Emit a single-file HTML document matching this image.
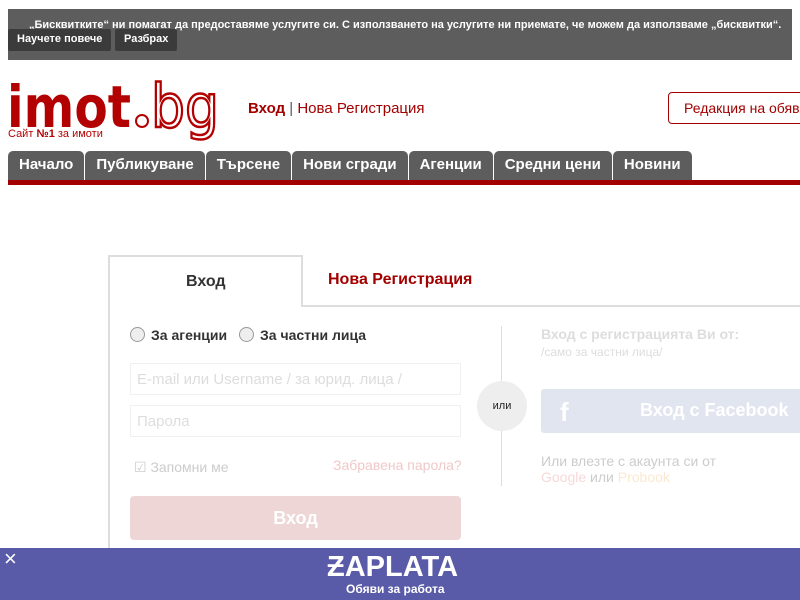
<!DOCTYPE html>
<html><head><meta charset="utf-8"><style>
*{margin:0;padding:0;box-sizing:border-box}
body{width:800px;height:600px;overflow:hidden;background:#fff;font-family:"Liberation Sans",sans-serif;position:relative}
.ck{position:absolute;left:8px;top:9px;width:784px;height:51px;background:#5d5d5d;color:#fff;font-size:11px;font-weight:bold}
.ck .t{position:absolute;left:21px;top:10px;white-space:nowrap}
.ck .b{position:absolute;top:20px;height:22px;background:#3b3b3b;border-radius:2px;padding:4px 9px;font-size:11px}
.nav{position:absolute;left:8px;top:151px;display:flex}
.nav div{background:#5d5d5d;color:#fff;font-weight:bold;font-size:15px;height:29px;padding:5px 11px 0;border-radius:5px 5px 0 0;margin-right:1px}
.bar{position:absolute;left:8px;top:180px;width:792px;height:5px;background:#a30000}
.a{position:absolute;white-space:nowrap}
</style></head><body>
<div class="ck"><div class="t">„Бисквитките“ ни помагат да предоставяме услугите си. С използването на услугите ни приемате, че можем да използваме „бисквитки“.</div>
<div class="b" style="left:0">Научете повече</div><div class="b" style="left:107px">Разбрах</div></div>
<svg class="a" style="left:6px;top:70px" width="220" height="75">
<text x="1" y="57" font-family="DejaVu Sans" font-weight="bold" font-size="58" fill="#b30000" textLength="124" lengthAdjust="spacingAndGlyphs">imot</text>
<circle cx="136" cy="51" r="6" fill="#fff" stroke="#b30000" stroke-width="2"/>
<text x="145" y="57" font-family="DejaVu Sans" font-size="60" fill="#fff" stroke="#b30000" stroke-width="2.5" textLength="68" lengthAdjust="spacingAndGlyphs">bg</text>
</svg>
<div class="a" style="left:8px;top:128px;font-size:11px;color:#b30000">Сайт <b>№1</b> за имоти</div>
<div class="a" style="left:248px;top:100px;font-size:15px;color:#a30000"><b>Вход</b> <span style="color:#555">|</span> Нова Регистрация</div>
<div class="a" style="left:668px;top:92px;width:140px;height:32px;border:1px solid #a30000;border-radius:4px;color:#a30000;font-size:14px;padding:7px 15px">Редакция на обяв</div>
<div class="nav"><div>Начало</div><div>Публикуване</div><div>Търсене</div><div>Нови сгради</div><div>Агенции</div><div>Средни цени</div><div>Новини</div></div>
<div class="bar"></div>
<div class="a" style="left:108px;top:305px;width:700px;height:2px;background:#ddd"></div>
<div class="a" style="left:108px;top:255px;width:195px;height:52px;border:2px solid #ddd;border-bottom:none;background:#fff"></div>
<div class="a" style="left:108px;top:305px;width:2px;height:250px;background:#ddd"></div>
<div class="a" style="left:186px;top:273px;font-size:16px;font-weight:bold;color:#333">Вход</div>
<div class="a" style="left:328px;top:271px;font-size:16px;font-weight:bold;color:#a30000">Нова Регистрация</div>
<div class="a" style="left:130px;top:327px;font-size:14px;font-weight:bold;color:#333"><span style="display:inline-block;width:15px;height:15px;border:1px solid #999;border-radius:50%;background:#eee;vertical-align:-2px;margin-right:6px"></span>За агенции <span style="display:inline-block;width:15px;height:15px;border:1px solid #999;border-radius:50%;background:#eee;vertical-align:-2px;margin:0 6px 0 8px"></span>За частни лица</div>
<div class="a" style="left:130px;top:363px;width:331px;height:32px;border:1px solid #f0f0f0;color:#ddd;font-size:15px;padding:7px 6px">E-mail или Username / за юрид. лица /</div>
<div class="a" style="left:130px;top:405px;width:331px;height:32px;border:1px solid #f0f0f0;color:#ddd;font-size:15px;padding:7px 6px">Парола</div>
<div class="a" style="left:134px;top:459px;font-size:14px;color:#ccc">☑ Запомни ме</div>
<div class="a" style="left:333px;top:457px;font-size:14px;color:#f0c8c8">Забравена парола?</div>
<div class="a" style="left:130px;top:496px;width:331px;height:44px;background:#eed6d6;border-radius:4px;color:#fff;font-size:18px;font-weight:bold;text-align:center;line-height:44px">Вход</div>
<div class="a" style="left:501px;top:326px;width:1px;height:160px;background:#ddd"></div>
<div class="a" style="left:477px;top:381px;width:50px;height:50px;border-radius:50%;background:#eee;font-size:11px;text-align:center;line-height:50px;color:#222">или</div>
<div class="a" style="left:541px;top:326px;font-size:14px;font-weight:bold;color:#ddd">Вход с регистрацията Ви от:</div>
<div class="a" style="left:541px;top:345px;font-size:12px;color:#ddd">/само за частни лица/</div>
<div class="a" style="left:541px;top:389px;width:270px;height:44px;background:#e0e5f0;border-radius:3px;color:#fff;font-weight:bold;font-size:18px"><span style="position:absolute;left:19px;top:8px;font-size:26px">f</span><span style="position:absolute;left:99px;top:11px">Вход с Facebook</span></div>
<div class="a" style="left:541px;top:453px;font-size:14px;color:#ccc;line-height:16px">Или влезте с акаунта си от<br><span style="color:#f6d8d8">Google</span> или <span style="color:#fbe8d0">Probook</span></div>
<div class="a" style="left:0;top:548px;width:800px;height:52px;background:#5a5ba8"></div>
<div class="a" style="left:4px;top:548px;color:#fff;font-size:22px;line-height:22px">×</div>
<div class="a" style="left:327px;top:551px;color:#fff;font-weight:bold;font-size:29px;letter-spacing:0;line-height:32px">ƵAPLATA</div>
<div class="a" style="left:346px;top:582px;color:#fff;font-weight:bold;font-size:12px">Обяви за работа</div>
</body></html>
